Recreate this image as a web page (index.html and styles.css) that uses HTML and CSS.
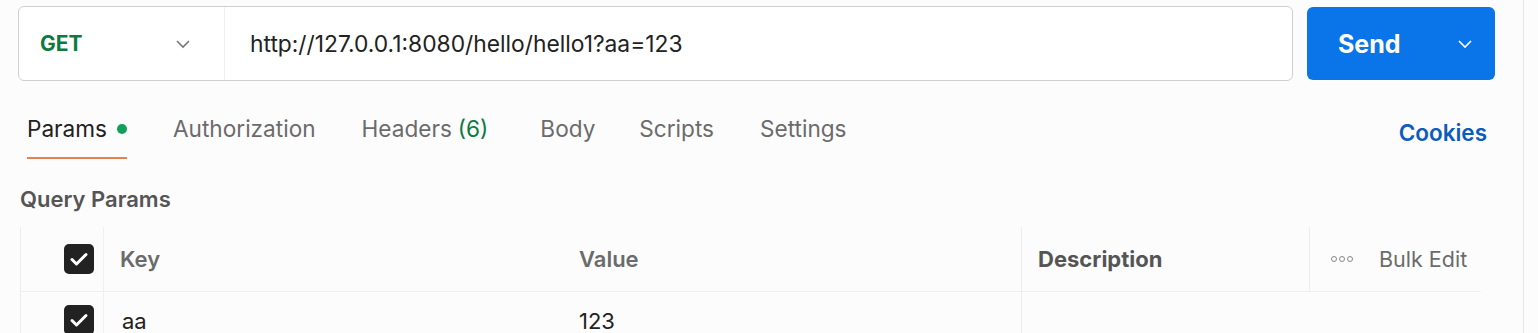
FILE: index.html
```html
<!DOCTYPE html>
<html lang="en">
<head>
    <meta charset="UTF-8">
    <title>Request</title>
    <link rel="stylesheet" href="styles.css">
</head>
<body>
    <div class="pane">
        <div class="request-bar">
            <div class="url-box">
                <div class="method">
                    <span class="method-name">GET</span>
                    <svg class="chevron" width="16" height="10" viewBox="0 0 16 10"><path d="M2 2l6 6 6-6" fill="none" stroke="#777" stroke-width="1.6"/></svg>
                </div>
                <div class="url">http://127.0.0.1:8080/hello/hello1?aa=123</div>
            </div>
            <button class="send">
                <span>Send</span>
                <svg width="16" height="10" viewBox="0 0 16 10"><path d="M2 2l6 6 6-6" fill="none" stroke="#fff" stroke-width="1.6"/></svg>
            </button>
        </div>

        <div class="tabs">
            <div class="tab active">Params <span class="dot"></span></div>
            <div class="tab">Authorization</div>
            <div class="tab headers">Headers <span class="count">(6)</span></div>
            <div class="tab">Body</div>
            <div class="tab scripts">Scripts</div>
            <div class="tab">Settings</div>
            <div class="cookies">Cookies</div>
        </div>

        <div class="section-title">Query Params</div>

        <div class="params">
            <div class="cell check-cell"><span class="check"><svg width="20" height="16" viewBox="0 0 20 16"><path d="M3 8.5l4.5 4.5L17 3.5" fill="none" stroke="#fff" stroke-width="3" stroke-linecap="round" stroke-linejoin="round"/></svg></span></div>
            <div class="cell head">Key</div>
            <div class="cell head">Value</div>
            <div class="cell head desc">Description</div>
            <div class="cell bulk">
                <span class="dots"><i></i><i></i><i></i></span>
                <span>Bulk Edit</span>
            </div>

            <div class="cell check-cell row"><span class="check"><svg width="20" height="16" viewBox="0 0 20 16"><path d="M3 8.5l4.5 4.5L17 3.5" fill="none" stroke="#fff" stroke-width="3" stroke-linecap="round" stroke-linejoin="round"/></svg></span></div>
            <div class="cell row val">aa</div>
            <div class="cell row val">123</div>
            <div class="cell row desc-row"></div>
        </div>
    </div>
</body>
</html>
```

FILE: styles.css
```css
body {
    margin: 0;
    background-color: #fdfcfd;
    font-family: Inter, "Noto Sans", sans-serif;
    color: #212121;
    overflow: hidden;
}
.pane {
    width: 1505px;
    height: 333px;
    padding-left: 18px;
    border-right: 1px solid #e6e6e6;
    overflow: hidden;
}
.request-bar {
    display: flex;
    align-items: flex-start;
    padding-top: 6px;
}
.url-box {
    width: 1273px;
    height: 73px;
    border: 1px solid #cfcfcf;
    border-radius: 6px;
    background: #fff;
    display: flex;
    align-items: center;
}
.method {
    width: 206px;
    height: 100%;
    box-sizing: border-box;
    padding-left: 21px;
    padding-right: 33px;
    display: flex;
    align-items: center;
    justify-content: space-between;
    border-right: 1px solid #f1f1f1;
}
.method-name {
    color: #0b7a3e;
    font-size: 21px;
    font-weight: 700;
}
.url {
    padding-left: 25px;
    font-size: 22.8px;
    color: #222;
}
.send {
    margin-left: 14px;
    margin-top: 1px;
    width: 188px;
    height: 73px;
    border: none;
    border-radius: 6px;
    background-color: #0a74e9;
    color: #fff;
    font-family: inherit;
    font-size: 25px;
    font-weight: 700;
    display: flex;
    align-items: center;
    justify-content: space-between;
    padding: 0 22px 0 31px;
}
.tabs {
    display: flex;
    align-items: flex-start;
    gap: 46px;
    margin-top: 34px;
    padding-left: 9px;
    width: 1460px;
    height: 46px;
}
.tab {
    font-size: 22.6px;
    color: #6b6b6b;
    height: 44px;
    line-height: 26px;
    padding-top: 1px;
    box-sizing: border-box;
    display: flex;
    align-items: flex-start;
    gap: 10px;
}
.tab.headers {
    margin-right: 6px;
}
.tab.scripts {
    margin-left: -2px;
}
.tab.active {
    color: #212121;
    border-bottom: 2px solid #e8814e;
}
.dot {
    width: 10px;
    height: 10px;
    border-radius: 50%;
    background: #11a05a;
    margin-top: 8px;
}
.count {
    color: #0b7a3e;
    margin-left: -4px;
}
.cookies {
    margin-left: auto;
    margin-top: 4px;
    font-size: 22.5px;
    font-weight: 600;
    color: #0b5cbd;
}
.section-title {
    margin-top: 25px;
    padding-left: 2px;
    font-size: 22px;
    font-weight: 600;
    color: #555;
}
.params {
    margin-top: 15px;
    margin-left: 2px;
    display: grid;
    grid-template-columns: 83px 459px 458px 288px 172px;
    grid-template-rows: 65px 42px;
    border-left: 1px solid #ececec;
}
.cell {
    display: flex;
    align-items: center;
    padding-left: 16px;
}
.check-cell {
    padding-left: 43px;
    border-right: 1px solid #f0f0f0;
}
.check {
    width: 30px;
    height: 30px;
    border-radius: 5px;
    background: #222;
    display: flex;
    align-items: center;
    justify-content: center;
}
.head {
    font-size: 22px;
    font-weight: 600;
    color: #6b6b6b;
    border-bottom: 1px solid #efefef;
}
.check-cell:not(.row) {
    border-bottom: 1px solid #efefef;
}
.head.desc {
    color: #555;
    font-weight: 700;
    border-left: 1px solid #ececec;
}
.bulk {
    border-left: 1px solid #ececec;
    border-bottom: 1px solid #efefef;
    padding-left: 21px;
    gap: 26px;
    font-size: 21.5px;
    color: #6b6b6b;
}
.dots {
    display: flex;
    gap: 2px;
}
.dots i {
    width: 4px;
    height: 4px;
    border: 1.3px solid #888;
    border-radius: 50%;
}
.row {
    align-items: flex-start;
    padding-top: 12px;
}
.check-cell.row {
    padding-top: 13px;
}
.val {
    font-size: 22px;
    color: #222;
    padding-top: 16px;
}
.val:nth-child(7) {
    padding-left: 18px;
}
.desc-row {
    grid-column: span 2;
    border-left: 1px solid #ececec;
}
```
